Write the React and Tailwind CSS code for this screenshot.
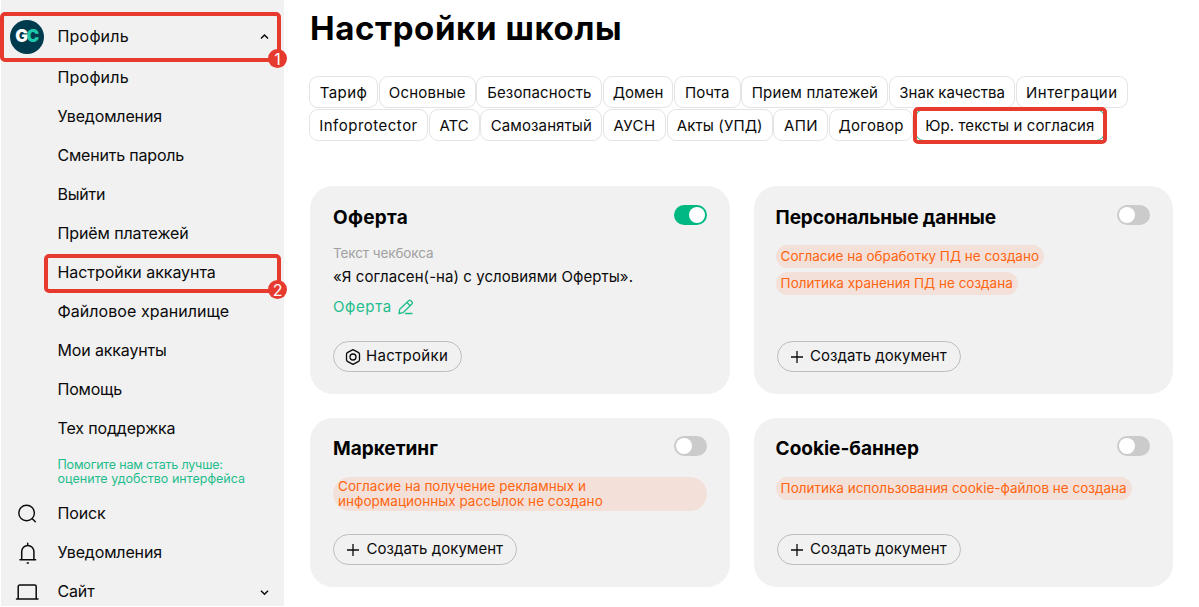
import React from 'react';

const tabRows = [
  [
    { label: 'Тариф', cls: 'w-[69px] tracking-[0.4px]' },
    { label: 'Основные', cls: 'w-[97px] tracking-[0.25px]' },
    { label: 'Безопасность', cls: 'w-[126px] tracking-[0.15px]' },
    { label: 'Домен', cls: 'w-[70px]' },
    { label: 'Почта', cls: 'w-[67px]' },
    { label: 'Прием платежей', cls: 'w-[147px] tracking-[0.15px]' },
    { label: 'Знак качества', cls: 'w-[126px]' },
    { label: 'Интеграции', cls: 'w-[112px] tracking-[0.45px]' },
  ],
  [
    { label: 'Infoprotector', cls: 'w-[119px] tracking-[0.5px]' },
    { label: 'АТС', cls: 'w-[51px]' },
    { label: 'Самозанятый', cls: 'w-[122px] tracking-[0.1px]' },
    { label: 'АУСН', cls: 'w-[63px] tracking-[0.4px]' },
    { label: 'Акты (УПД)', cls: 'w-[106px] tracking-[0.1px]' },
    { label: 'АПИ', cls: 'w-[55px] tracking-[0.4px]' },
    { label: 'Договор', cls: 'w-[84px] tracking-[0.3px]' },
    { label: 'Юр. тексты и согласия', cls: 'ml-px w-[190px] tracking-[0.1px]', active: true },
  ],
];

const profileItems = [
  { label: 'Профиль', cls: 'tracking-[0.2px]' },
  { label: 'Уведомления', cls: 'tracking-[-0.15px]' },
  { label: 'Сменить пароль', cls: 'tracking-[-0.2px]' },
  { label: 'Выйти', cls: 'tracking-[-0.2px]' },
  { label: 'Приём платежей', cls: 'tracking-[-0.1px]' },
  { label: 'Настройки аккаунта', cls: 'tracking-[-0.05px]', mark: 2 },
  { label: 'Файловое хранилище', cls: 'tracking-[0.05px]' },
  { label: 'Мои аккаунты', cls: 'tracking-[-0.15px]' },
  { label: 'Помощь', cls: 'tracking-[-0.2px]' },
  { label: 'Тех поддержка', cls: 'tracking-[-0.15px]' },
];

const Icon = ({ name }) => {
  if (name === 'search') return <svg className="w-6 h-6" fill="none" stroke="currentColor" strokeWidth="1.4" strokeLinecap="round" viewBox="0 0 24 24"><circle cx="11.6" cy="11" r="7.8" /><path d="M17.5 17l2.800 2.800" /></svg>;
  if (name === 'bell') return <svg className="w-6 h-6" fill="none" stroke="currentColor" strokeWidth="1.5" strokeLinecap="round" viewBox="0 0 24 24"><path d="M5 18.800h15.600M6.700 18.800v-8.300a6.100 6.100 0 0112.200 0v8.300M12.700 4V2.300M12.200 22h1.200" /></svg>;
  if (name === 'laptop') return <svg className="w-6 h-6" fill="none" stroke="currentColor" strokeWidth="1.5" strokeLinecap="round" viewBox="0 0 24 24"><path d="M1.500 19h21.500M3.200 19V6.500a1.500 1.500 0 011.500-1.500h15a1.500 1.500 0 011.500 1.500V19" /></svg>;
  if (name === 'up') return <svg className="w-2.5 h-2.5" fill="none" stroke="currentColor" strokeWidth="1.5" viewBox="0 0 10 10"><path d="M2 6.500L5.500 3 9 6.500" /></svg>;
  if (name === 'down') return <svg className="w-2.5 h-2.5" fill="none" stroke="currentColor" strokeWidth="1.5" viewBox="0 0 10 10"><path d="M2 3.800l3.500 3.500L9 3.800" /></svg>;
  if (name === 'plus') return <svg className="w-3 h-3" fill="none" stroke="currentColor" strokeWidth="1.3" viewBox="0 0 12 12"><path d="M6 0v12M0 6h12" /></svg>;
  if (name === 'nut') return <svg className="w-4 h-4" fill="none" stroke="currentColor" strokeWidth="1.3" strokeLinejoin="round" viewBox="0 0 16 16"><path d="M8 .7l5.200 2.700q1.300.7 1.300 1.900v5.400q0 1.200-1.300 1.900L8 15.300l-5.200-2.700Q1.500 11.900 1.500 10.700V5.300q0-1.200 1.300-1.900z" /><circle cx="8" cy="8" r="3" /></svg>;
  if (name === 'pen') return <svg className="w-4 h-4" fill="none" stroke="currentColor" strokeWidth="1.3" strokeLinecap="round" strokeLinejoin="round" viewBox="0 0 16 16"><path d="M1 14.500l.7-4.200 8.900-8.600a1.600 1.600 0 012.300 0l1 1a1.600 1.600 0 010 2.300l-8.900 8.700zM9 3.500l3.200 3.200M7.500 14.500H14" /></svg>;
  return null;
};

// red numbered pointer that sits on a frame corner
const Marker = ({ n }) => (
  <span className="absolute -right-[10px] -bottom-[10px] flex h-[19px] w-[19px] items-center justify-center rounded-full bg-[#e63a2e] text-[16px] leading-none text-white">{n}</span>
);

const Toggle = ({ on }) => (
  <span className={`flex h-5 w-[33px] shrink-0 items-center rounded-full px-0.5 ${on ? 'justify-end bg-[#00b982]' : 'bg-[#cbcbcb]'}`}>
    <span className="h-4 w-4 rounded-full bg-white" />
  </span>
);

const Card = ({ title, on, button = 'Создать документ', icon = 'plus', titleCls, toggleCls, children }) => (
  <section className="flex flex-col items-start rounded-[23px] bg-[#f1f1f1] px-[23px] pt-[19px] pb-[22px]">
    <div className="flex w-full items-start justify-between">
      <h2 className={`text-[19px] leading-6 font-bold whitespace-nowrap text-black ${titleCls}`}>{title}</h2>
      <div className={toggleCls}>
        <Toggle on={on} />
      </div>
    </div>
    {children}
    <button className={`mt-auto flex h-[31px] items-center rounded-full border border-[#bdbdbd] text-[15px] whitespace-nowrap ${icon === 'nut' ? 'w-[129px] gap-[5px] pl-[11px] tracking-[0.3px]' : 'w-[184px] gap-[7.500px] pl-[13px] tracking-[0.03px]'}`}>
      <Icon name={icon} />
      <span className="pb-px">{button}</span>
    </button>
  </section>
);

const Pill = ({ cls, children }) => (
  <span className={`rounded-full bg-[#f3e1d9] px-[5px] py-1 text-[13.500px] leading-[15px] whitespace-nowrap text-[#ff6410] ${cls}`}>{children}</span>
);

export default function App() {
  return (
    <div className="flex h-[607px] w-[1199px] overflow-hidden bg-white font-[Inter,'Noto_Sans',sans-serif] text-[#0a0a0a]">
      <aside className="ml-px h-[606px] w-[283px] shrink-0 bg-[#f1f1f1] pt-4 text-[16px]">
        <div className="relative flex h-[42px] items-center pr-[15px] pl-[9px]">
          <span className="flex h-[34px] w-[34px] items-center justify-center rounded-full bg-[#003a4d] pr-px text-[17px] font-black tracking-[-1.500px] text-white">
            G<span className="text-[#1fc9ac]">C</span>
          </span>
          <span className="ml-[13.500px] flex-1 pb-0.5 tracking-[0.2px]">Профиль</span>
          <Icon name="up" />
          <div className="absolute -top-1 -left-px h-[50px] w-[281px] rounded-[5px] border-4 border-[#e63a2e]">
            <Marker n={1} />
          </div>
        </div>
        <nav>
          {profileItems.map(i => (
            <div key={i.label} className={`relative flex h-[39px] items-center pb-0.5 pl-[56.500px] ${i.cls}`}>
              <span>{i.label}</span>
              {i.mark && (
                <div className="absolute top-px left-[43px] h-[39px] w-[237px] rounded-[5px] border-4 border-[#e63a2e]">
                  <Marker n={i.mark} />
                </div>
              )}
            </div>
          ))}
        </nav>
        <p className="h-[46px] pt-[9.500px] pl-[56.500px] text-[12.500px] leading-[14.500px] tracking-[0.03px] whitespace-nowrap text-[#1fbd8c]">
          <span className="tracking-[-0.18px]">Помогите нам стать лучше:</span><br />оцените удобство интерфейса
        </p>
        {[['search', 'Поиск'], ['bell', 'Уведомления'], ['laptop', 'Сайт']].map(([icon, label]) => (
          <div key={label} className="flex h-[39px] items-center pr-[15px] pl-[14px]">
            <Icon name={icon} />
            <span className="ml-[18.500px] flex-1 pb-px tracking-[-0.15px]">{label}</span>
            {icon === 'laptop' && <Icon name="down" />}
          </div>
        ))}
      </aside>

      <main className="pl-[25px]">
        <h1 className="mt-2 ml-px text-[33px] leading-10 font-bold tracking-[0.600px] whitespace-nowrap text-black">Настройки школы</h1>
        <div className="mt-7 space-y-px">
          {tabRows.map((row, r) => (
            <div key={r} className="flex gap-[0.700px]">
              {row.map(t => (
                <div key={t.label} className={`relative flex h-8 shrink-0 items-center justify-center rounded-[9px] border pt-0.5 text-[15px] whitespace-nowrap ${t.active ? 'border-[#1fbd8c]' : 'border-[#e4e4e4]'} ${t.cls}`}>
                  <span>{t.label}</span>
                  {t.active && <div className="absolute -inset-x-[3px] -top-[3px] -bottom-1 rounded-[5px] border-4 border-[#e63a2e]" />}
                </div>
              ))}
            </div>
          ))}
        </div>

        <div className="mt-[45px] ml-px grid grid-cols-[420px_419px] grid-rows-[208px_169px] gap-x-[23.600px] gap-y-6">
          <Card title="Оферта" on button="Настройки" icon="nut" titleCls="pt-px tracking-[0.3px]">
            <div className="mt-4 text-[13.500px] leading-[15px] tracking-[-0.1px] text-[#a0a0a0]">Текст чекбокса</div>
            <div className="mt-1.5 text-[15px] leading-5 tracking-[0.06px] whitespace-nowrap">«Я согласен(-на) с условиями Оферты».</div>
            <div className="mt-2.5 flex items-center gap-1.5 text-[15px] leading-5 text-[#1fbd8c]">
              <span className="tracking-[0.600px]">Оферта</span>
              <Icon name="pen" />
            </div>
          </Card>
          <Card title="Персональные данные" titleCls="pt-px -ml-px tracking-[-0.13px]">
            <Pill cls="mt-[15px] -ml-px">Согласие на обработку ПД не создано</Pill>
            <Pill cls="mt-1 -ml-px">Политика хранения ПД не создана</Pill>
          </Card>
          <Card title="Маркетинг" toggleCls="-mt-px">
            <Pill cls="mt-4 w-[374px] py-[2px] tracking-[0.04px]">Согласие на получение рекламных и<br />информационных рассылок не создано</Pill>
          </Card>
          <Card title="Cookie-баннер" titleCls="-ml-px" toggleCls="-mt-px">
            <Pill cls="mt-4 -ml-px">Политика использования cookie-файлов не создана</Pill>
          </Card>
        </div>
      </main>
    </div>
  );
}
